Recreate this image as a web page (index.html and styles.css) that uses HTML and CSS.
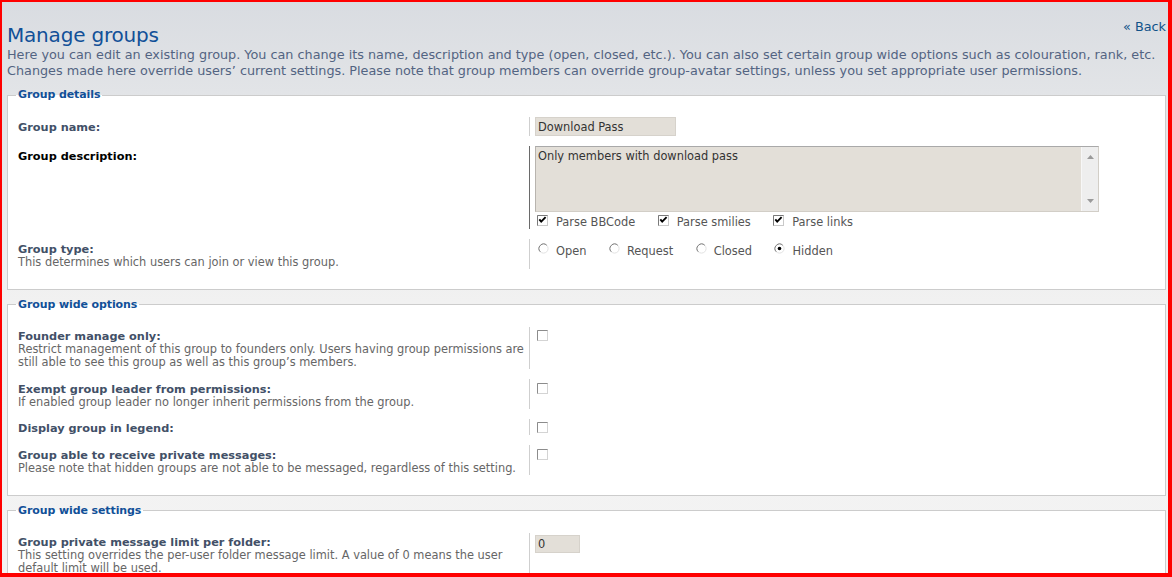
FILE: index.html
```html
<!DOCTYPE html>
<html lang="en">
<head>
<meta charset="utf-8">
<title>Manage groups</title>
<link rel="stylesheet" href="styles.css">
</head>
<body>
<div class="frame">
  <div class="top">
    <h1 class="title">Manage groups</h1>
    <a class="back" href="#">« Back</a>
  </div>
  <p class="intro">Here you can edit an existing group. You can change its name, description and type (open, closed, etc.). You can also set certain group wide options such as colouration, rank, etc.<br>Changes made here override users’ current settings. Please note that group members can override group-avatar settings, unless you set appropriate user permissions.</p>

  <fieldset class="fs">
    <legend class="lg">Group details</legend>
    <div class="rows">
      <div class="row">
        <div class="dt"><label class="lbl">Group name:</label></div>
        <div class="dd"><input class="txt name" type="text" value="Download Pass"></div>
      </div>
      <div class="row">
        <div class="dt"><label class="lbl dark">Group description:</label></div>
        <div class="dd dd-dark">
          <div class="ta">
            <div class="ta-text">Only members with download pass</div>
            <div class="ta-bar">
              <svg class="arrow" width="7" height="4" viewBox="0 0 7 4"><path d="M0 4 L3.5 0 L7 4 Z" fill="#9a9a9a"/></svg>
              <svg class="arrow" width="7" height="4" viewBox="0 0 7 4"><path d="M0 0 L3.5 4 L7 0 Z" fill="#9a9a9a"/></svg>
            </div>
          </div>
          <div class="opts checks">
            <span class="opt"><svg class="cb" width="11" height="11" viewBox="0 0 11 11"><rect x="0.5" y="0.5" width="10" height="10" fill="#fff" stroke="#c9c9c9"/><path d="M0.5 10.5 V0.5 H10.5" fill="none" stroke="#7a7a7a"/><path d="M2.3 4.4 L4.2 6.6 L8.6 2.2" fill="none" stroke="#000" stroke-width="1.9"/></svg>Parse BBCode</span>
            <span class="opt"><svg class="cb" width="11" height="11" viewBox="0 0 11 11"><rect x="0.5" y="0.5" width="10" height="10" fill="#fff" stroke="#c9c9c9"/><path d="M0.5 10.5 V0.5 H10.5" fill="none" stroke="#7a7a7a"/><path d="M2.3 4.4 L4.2 6.6 L8.6 2.2" fill="none" stroke="#000" stroke-width="1.9"/></svg>Parse smilies</span>
            <span class="opt"><svg class="cb" width="11" height="11" viewBox="0 0 11 11"><rect x="0.5" y="0.5" width="10" height="10" fill="#fff" stroke="#c9c9c9"/><path d="M0.5 10.5 V0.5 H10.5" fill="none" stroke="#7a7a7a"/><path d="M2.3 4.4 L4.2 6.6 L8.6 2.2" fill="none" stroke="#000" stroke-width="1.9"/></svg>Parse links</span>
          </div>
        </div>
      </div>
      <div class="row">
        <div class="dt"><label class="lbl">Group type:</label><span class="exp">This determines which users can join or view this group.</span></div>
        <div class="dd">
          <div class="opts radios">
            <span class="opt"><svg class="rd" width="11" height="11" viewBox="0 0 11 11"><circle cx="5.5" cy="5.5" r="4.6" fill="#fff" stroke="#e2e2e2"/><path d="M2.25 8.75 A4.6 4.6 0 0 1 8.75 2.25" fill="none" stroke="#7d7d7d"/></svg>Open</span>
            <span class="opt"><svg class="rd" width="11" height="11" viewBox="0 0 11 11"><circle cx="5.5" cy="5.5" r="4.6" fill="#fff" stroke="#e2e2e2"/><path d="M2.25 8.75 A4.6 4.6 0 0 1 8.75 2.25" fill="none" stroke="#7d7d7d"/></svg>Request</span>
            <span class="opt"><svg class="rd" width="11" height="11" viewBox="0 0 11 11"><circle cx="5.5" cy="5.5" r="4.6" fill="#fff" stroke="#e2e2e2"/><path d="M2.25 8.75 A4.6 4.6 0 0 1 8.75 2.25" fill="none" stroke="#7d7d7d"/></svg>Closed</span>
            <span class="opt"><svg class="rd" width="11" height="11" viewBox="0 0 11 11"><circle cx="5.5" cy="5.5" r="4.6" fill="#fff" stroke="#e2e2e2"/><path d="M2.25 8.75 A4.6 4.6 0 0 1 8.75 2.25" fill="none" stroke="#7d7d7d"/><circle cx="5.5" cy="5.5" r="1.8" fill="#000"/></svg>Hidden</span>
          </div>
        </div>
      </div>
    </div>
  </fieldset>

  <fieldset class="fs">
    <legend class="lg">Group wide options</legend>
    <div class="rows">
      <div class="row">
        <div class="dt"><label class="lbl">Founder manage only:</label><span class="exp">Restrict management of this group to founders only. Users having group permissions are<br>still able to see this group as well as this group’s members.</span></div>
        <div class="dd dd-check"><svg class="cb" width="11" height="11" viewBox="0 0 11 11"><rect x="0.5" y="0.5" width="10" height="10" fill="#fff" stroke="#d4d4d4"/><path d="M0.5 10.5 V0.5 H10.5" fill="none" stroke="#8c8c8c"/></svg></div>
      </div>
      <div class="row">
        <div class="dt"><label class="lbl">Exempt group leader from permissions:</label><span class="exp">If enabled group leader no longer inherit permissions from the group.</span></div>
        <div class="dd dd-check"><svg class="cb" width="11" height="11" viewBox="0 0 11 11"><rect x="0.5" y="0.5" width="10" height="10" fill="#fff" stroke="#d4d4d4"/><path d="M0.5 10.5 V0.5 H10.5" fill="none" stroke="#8c8c8c"/></svg></div>
      </div>
      <div class="row">
        <div class="dt"><label class="lbl">Display group in legend:</label></div>
        <div class="dd dd-check"><svg class="cb" width="11" height="11" viewBox="0 0 11 11"><rect x="0.5" y="0.5" width="10" height="10" fill="#fff" stroke="#d4d4d4"/><path d="M0.5 10.5 V0.5 H10.5" fill="none" stroke="#8c8c8c"/></svg></div>
      </div>
      <div class="row">
        <div class="dt"><label class="lbl">Group able to receive private messages:</label><span class="exp">Please note that hidden groups are not able to be messaged, regardless of this setting.</span></div>
        <div class="dd dd-check"><svg class="cb" width="11" height="11" viewBox="0 0 11 11"><rect x="0.5" y="0.5" width="10" height="10" fill="#fff" stroke="#d4d4d4"/><path d="M0.5 10.5 V0.5 H10.5" fill="none" stroke="#8c8c8c"/></svg></div>
      </div>
    </div>
  </fieldset>

  <fieldset class="fs">
    <legend class="lg">Group wide settings</legend>
    <div class="rows">
      <div class="row">
        <div class="dt"><label class="lbl">Group private message limit per folder:</label><span class="exp">This setting overrides the per-user folder message limit. A value of 0 means the user<br>default limit will be used.</span></div>
        <div class="dd"><input class="txt small" type="text" value="0"></div>
      </div>
    </div>
  </fieldset>
</div>
</body>
</html>
```

FILE: styles.css
```css
* {
  box-sizing: border-box;
}

html,
body {
  margin: 0;
  padding: 0;
}

body {
  font-family: "DejaVu Sans", Verdana, sans-serif;
  background: #ffffff;
}

.frame {
  width: 1172px;
  height: 577px;
  overflow: hidden;
  border: 2px solid #ff0000;
  border-right-width: 4px;
  border-bottom-width: 4px;
  padding: 0 2px 0 5px;
  background: linear-gradient(#d9dce1 0px, #e2e4e7 90px, #f1f1f1 300px, #f3f3f3 100%);
}

.top {
  display: flex;
  justify-content: space-between;
  align-items: flex-start;
}

.title {
  margin: 21px 0 0;
  font-size: 20px;
  line-height: 24px;
  letter-spacing: -0.2px;
  font-weight: normal;
  color: #115098;
}

.back {
  margin-top: 17px;
  font-size: 12.8px;
  line-height: 16px;
  color: #105289;
  text-decoration: none;
}

.intro {
  margin: 0 0 9px;
  font-size: 12.8px;
  line-height: 16px;
  color: #536482;
  white-space: nowrap;
}

.fs {
  margin: 0 0 8px;
  padding: 15px 10px 20px 8px;
  border: 1px solid #cccccc;
  background: #ffffff;
  min-width: 0;
}

.lg {
  padding: 0 2px;
  font-size: 11px;
  font-weight: bold;
  line-height: 14px;
  letter-spacing: -0.1px;
  color: #115098;
}

.rows {
  display: flex;
  flex-direction: column;
  gap: 10px;
  margin-left: 2px;
}

.row {
  display: grid;
  grid-template-columns: 511px 1fr;
}

.dt {
  padding-top: 3.5px;
  font-size: 11.4px;
  line-height: 13px;
  color: #666666;
}

.lbl {
  display: block;
  font-weight: bold;
  font-size: 11.3px;
  color: #425067;
}

.lbl.dark {
  color: #000000;
}

.exp {
  display: block;
  white-space: nowrap;
}

.dd {
  border-left: 1px solid #cfcfcf;
  padding-left: 5px;
}

.dd-dark {
  border-left-color: #6a6a6a;
}

.dd-check {
  padding-top: 3.5px;
  padding-left: 7px;
}

.cb,
.rd {
  display: block;
  flex: none;
}

.txt {
  display: block;
  margin: 0;
  padding: 0 2px;
  height: 19px;
  border: 1px solid #d6d2cb;
  background: #e3dfd8;
  font-family: "DejaVu Sans", Verdana, sans-serif;
  font-size: 11.4px;
  color: #333333;
  outline: none;
}

.txt.name {
  width: 141px;
}

.txt.small {
  width: 45px;
  height: 18px;
  margin-top: 2px;
}

.ta {
  display: flex;
  width: 564px;
  height: 66px;
  border: 1px solid #d2cec7;
  border-top-color: #a9a9a9;
  border-left-color: #b8b4ae;
  background: #e3dfd8;
}

.ta-text {
  flex: 1;
  padding: 3px 2px 0;
  font-size: 11.4px;
  line-height: 13px;
  color: #333333;
}

.ta-bar {
  width: 17px;
  display: flex;
  flex-direction: column;
  justify-content: space-between;
  align-items: center;
  padding: 8px 0 8px;
  background: #eeeeee;
  border-left: 1px solid #f7f7f7;
}

.arrow {
  display: block;
}

.opts {
  display: flex;
  gap: 22.5px;
  font-size: 11.4px;
  line-height: 13px;
  color: #555555;
}

.checks {
  margin-top: 3px;
  padding-left: 2px;
}

.checks .opt {
  padding-top: 1px;
}

.checks .cb {
  margin-top: -1px;
  margin-right: 8px;
}

.radios {
  padding-top: 5px;
  padding-left: 3px;
}

.radios .opt {
  padding-top: 1px;
}

.radios .rd {
  margin-top: -2px;
  margin-right: 7px;
}

.opt {
  display: flex;
  align-items: flex-start;
}
```
